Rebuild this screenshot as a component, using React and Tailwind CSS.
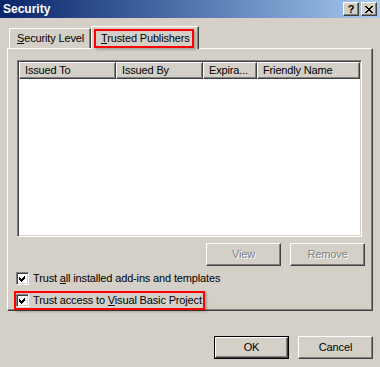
const raised =
  'border-l border-t border-r border-b border-l-white border-t-white border-r-[#404040] border-b-[#404040] shadow-[inset_-1px_-1px_0_#808080]';
const sunken =
  'border-l border-t border-r border-b border-l-[#808080] border-t-[#808080] border-r-white border-b-white shadow-[inset_1px_1px_0_#404040,inset_-1px_-1px_0_#d4d0c8]';

const Check = () => (
  <div className={`w-[13px] h-[13px] shrink-0 bg-white flex items-center justify-center ${sunken}`}>
    <svg width="9" height="9" viewBox="0 0 9 9" shapeRendering="crispEdges">
      <polygon points="1,3 3,5 7,1 7,4 3,8 1,6" fill="#000" />
    </svg>
  </div>
);

const Button = ({ children, disabled, isDefault }) => (
  <div className={`w-[75px] h-[23px] ${isDefault ? 'border border-black' : ''}`}>
    <div
      className={`w-full h-full flex items-center justify-center ${raised} ${
        disabled ? 'text-[#808080] [text-shadow:1px_1px_0_#fff]' : 'text-black'
      }`}
    >
      {children}
    </div>
  </div>
);

const columns = [
  { label: 'Issued To', w: 'w-[97px]' },
  { label: 'Issued By', w: 'w-[87px]' },
  { label: 'Expira...', w: 'w-[54px]' },
  { label: 'Friendly Name', w: 'w-[103px]' },
];

export default function App() {
  return (
    <div className="w-[380px] h-[367px] bg-[#d4d0c8] flex flex-col overflow-hidden whitespace-nowrap text-[11px] tracking-[-0.15px] text-black font-['Tahoma','Liberation_Sans',sans-serif]">
      {/* title bar */}
      <div className="h-[18px] shrink-0 flex items-center justify-between pl-[3px] pr-[3px] bg-linear-to-r from-[#0a246a] to-[#a6caf0]">
        <span className="text-white font-bold text-[12px] leading-none tracking-normal">Security</span>
        <div className="flex gap-[2px]">
          <div className={`w-[16px] h-[14px] bg-[#d4d0c8] flex items-center justify-center font-bold text-[11px] leading-none ${raised}`}>
            ?
          </div>
          <div className={`w-[16px] h-[14px] bg-[#d4d0c8] flex items-center justify-center ${raised}`}>
            <svg width="8" height="7" viewBox="0 0 8 7" shapeRendering="crispEdges">
              <path d="M0.5 0 L7.5 7 M7.5 0 L0.5 7" stroke="#000" strokeWidth="1.6" />
            </svg>
          </div>
        </div>
      </div>

      {/* tabs */}
      <div className="mt-[8px] pl-[9px] flex items-end h-[22px] shrink-0 relative z-10">
        <div className="w-[82px] h-[20px] flex items-center pl-[7px] border-l border-t border-white rounded-tl-[2px] border-r border-r-[#404040] shadow-[inset_-1px_0_0_#808080]">
          <span>
            <span className="underline">S</span>ecurity Level
          </span>
        </div>
        <div className="w-[108px] h-[23px] -mb-px flex items-start pt-[2px] pl-[2px] bg-[#d4d0c8] border-l border-t border-white rounded-tl-[2px] border-r border-r-[#404040] shadow-[inset_-1px_0_0_#808080]">
          <div className="w-[100px] h-[19px] border-2 border-[#ff0000] flex items-center pl-[5px] shadow-[2px_2px_2px_rgba(0,0,0,0.2)]">
            <span>
              <span className="underline">T</span>rusted Publishers
            </span>
          </div>
        </div>
      </div>

      {/* panel */}
      <div className="ml-[7px] w-[366px] h-[263px] shrink-0 border-l border-t border-white border-r border-b border-r-[#404040] border-b-[#404040] shadow-[inset_-1px_-1px_0_#808080] pt-[11px] pl-[9px] flex flex-col">
        <div className={`w-[345px] h-[177px] bg-white flex flex-col p-px ${sunken}`}>
          <div className="flex h-[17px]">
            {columns.map((c) => (
              <div key={c.label} className={`${c.w} h-full bg-[#d4d0c8] flex items-center pl-[5px] ${raised}`}>
                {c.label}
              </div>
            ))}
          </div>
        </div>

        <div className="mt-[6px] flex justify-end gap-[9px] pr-[7px]">
          <Button disabled>View</Button>
          <Button disabled>Remove</Button>
        </div>

        <div className="mt-[4px] -ml-px flex items-center gap-[4px]">
          <Check />
          <span>
            Trust <span className="underline">a</span>ll installed add-ins and templates
          </span>
        </div>

        <div className="mt-[4px] -ml-[3px] w-[191px] h-[19px] border-2 border-[#ff0000] flex items-center gap-[4px] shadow-[2px_2px_2px_rgba(0,0,0,0.2)]">
          <Check />
          <span>
            Trust access to <span className="underline">V</span>isual Basic Project
          </span>
        </div>
      </div>

      {/* dialog buttons */}
      <div className="mt-[25px] flex justify-end gap-[9px] pr-[7px]">
        <Button isDefault>OK</Button>
        <Button>Cancel</Button>
      </div>
    </div>
  );
}
